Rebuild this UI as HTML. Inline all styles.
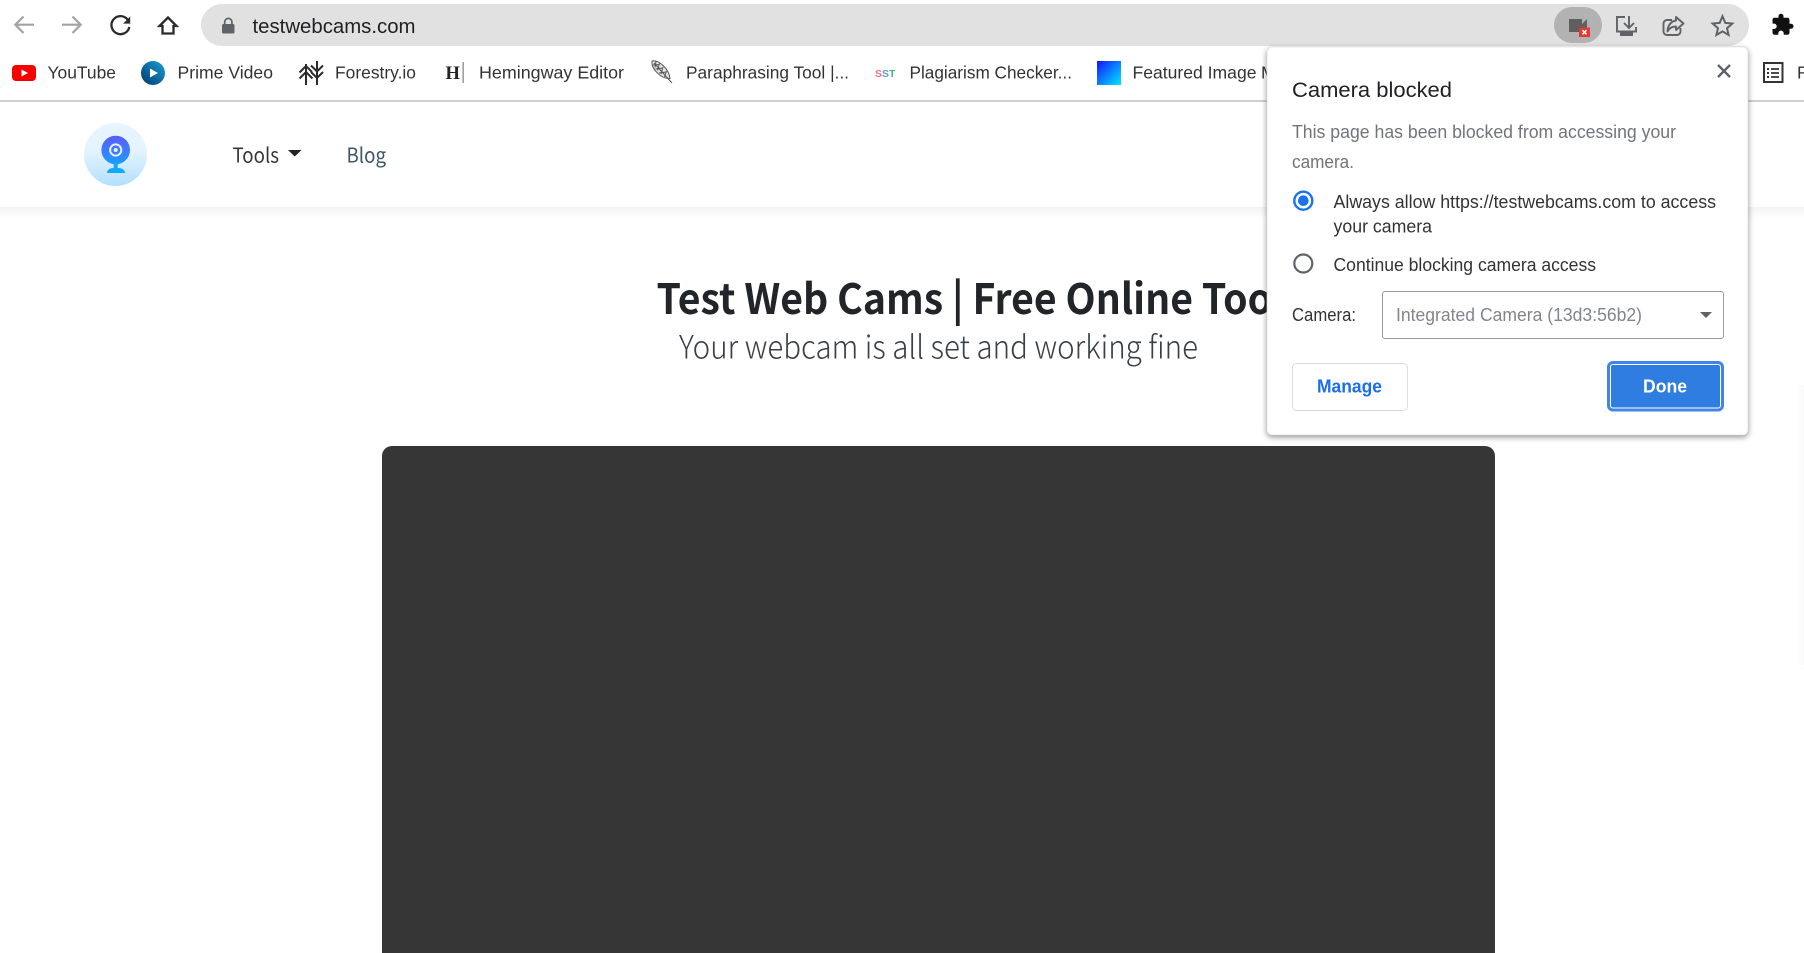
<!DOCTYPE html>
<html lang="en"><head><meta charset="utf-8"><title>Test Web Cams</title>
<style>
html,body{margin:0;padding:0;background:#fff;width:1804px;height:953px;overflow:hidden}
svg{display:block}
text{white-space:pre}
.b{font:17.6px "Liberation Sans",sans-serif;fill:#333}
.p{font:18px "Liberation Sans",sans-serif;fill:#333}
.s{font-family:"Noto Sans CJK JP","Liberation Sans",sans-serif}
</style></head><body>
<svg width="1804" height="953" viewBox="0 0 1804 953" xmlns="http://www.w3.org/2000/svg">
<defs>
<linearGradient id="lg" x1="0" y1="0" x2="0" y2="1"><stop offset="0" stop-color="#e8f5ff"/><stop offset=".45" stop-color="#e4f3ff"/><stop offset="1" stop-color="#b3dfff"/></linearGradient>
<linearGradient id="cg" x1="0" y1="0" x2="0" y2="1"><stop offset="0" stop-color="#5a5cff"/><stop offset="1" stop-color="#1e9cff"/></linearGradient>
<linearGradient id="pg" x1="0" y1="1" x2="1" y2="0"><stop offset="0" stop-color="#00386b"/><stop offset="1" stop-color="#1ba1d8"/></linearGradient>
<linearGradient id="fg" x1="0" y1="0" x2="1" y2="1"><stop offset="0" stop-color="#1414ff"/><stop offset="1" stop-color="#00eaff"/></linearGradient>
<linearGradient id="sh" x1="0" y1="0" x2="0" y2="1"><stop offset="0" stop-color="#f3f3f3"/><stop offset="1" stop-color="#fff"/></linearGradient>
<linearGradient id="rs" x1="0" y1="0" x2="1" y2="0"><stop offset="0" stop-color="#fff"/><stop offset="1" stop-color="#fafafa"/></linearGradient>
</defs>

<!-- toolbar -->
<g fill="none" stroke="#a3a3a3" stroke-width="2.2">
<path d="M34 24.7H16M23.5 16.5L15.3 24.7L23.5 33"/>
<path d="M62 24.7H80M72.5 16.5L80.7 24.7L72.5 33"/>
</g>
<g fill="none" stroke="#2a2a2a" stroke-width="2.3">
<path d="M127.5 19.5A9 9 0 1 0 129.3 27"/>
<path d="M130.2 16.5V23.6H123.1Z" fill="#2a2a2a" stroke="none"/>
<path d="M168 17.5L159.5 26H162.5V33.5H173.5V26H176.5Z" stroke-linejoin="miter"/>
</g>
<rect x="201" y="4" width="1548" height="42" rx="21" fill="#e1e1e1"/>
<rect x="222" y="24" width="12.5" height="9.5" rx="1.5" fill="#5f6368"/>
<path d="M224.7 24.5V22a3.6 3.6 0 0 1 7.2 0V24.5" fill="none" stroke="#5f6368" stroke-width="1.7"/>
<text x="252.5" y="33" textLength="163" lengthAdjust="spacingAndGlyphs" style="font:20.4px 'Liberation Sans',sans-serif;fill:#202124">testwebcams.com</text>

<!-- blocked camera chip -->
<rect x="1554" y="7" width="48" height="36" rx="18" fill="#b2b2b2"/>
<rect x="1569" y="19" width="13" height="13" fill="#5f5f5f"/>
<path d="M1582 24L1587 19V30H1582Z" fill="#5f5f5f"/>
<rect x="1579" y="27.5" width="11" height="9.5" fill="#e53935"/>
<path d="M1582.5 30.2L1586.5 34.3M1586.5 30.2L1582.5 34.3" stroke="#fff" stroke-width="1.5"/>

<!-- install, share, star -->
<g fill="none" stroke="#5f6368" stroke-width="1.9">
<path d="M1625 17H1617V31.500H1636V27"/>
<path d="M1629 16V28M1624 23L1629 28L1634 23"/>
<path d="M1672 20H1667a3.5 3.5 0 0 0-3.5 3.5V31.5a3.5 3.5 0 0 0 3.5 3.5H1677a3.5 3.5 0 0 0 3.5-3.5V28"/>
<path d="M1676 17L1683.5 23.5L1676 30V26.5C1671.5 26.5 1669 28.5 1667.5 31.5C1667.5 26 1671 21 1676 20.5Z" stroke-linejoin="round"/>
<path d="M1722.5 16.200L1725.3 22.900L1732.3 23.500L1727 28.200L1728.6 35L1722.5 31.400L1716.4 35L1718 28.200L1712.7 23.500L1719.7 22.900Z" stroke-width="2"/>
</g>
<rect x="1620" y="32.500" width="13" height="3.500" fill="#5f6368"/>
<path transform="translate(1770.5 12.8)" fill="#111" d="M20.5 11H19V7c0-1.1-.9-2-2-2h-4V3.5C13 2.12 11.88 1 10.5 1S8 2.12 8 3.5V5H4c-1.1 0-1.99.9-1.99 2v3.8H3.5c1.49 0 2.7 1.21 2.7 2.7s-1.21 2.7-2.7 2.7H2V20c0 1.1.9 2 2 2h3.8v-1.5c0-1.49 1.21-2.7 2.7-2.7 1.49 0 2.7 1.21 2.7 2.7V22H17c1.1 0 2-.9 2-2v-4h1.5c1.38 0 2.5-1.12 2.5-2.5S21.88 11 20.5 11z"/>

<!-- bookmarks -->
<rect x="12" y="65" width="24" height="16" rx="4" fill="#f70000"/>
<path d="M21.5 69.5L28 73L21.5 76.5Z" fill="#fff"/>
<text class="b" x="47.500" y="78.5" textLength="68.500" lengthAdjust="spacingAndGlyphs">YouTube</text>
<circle cx="153" cy="73" r="12" fill="url(#pg)"/>
<path d="M150 68.5L158 73L150 77.5Z" fill="#fff"/>
<text class="b" x="177.500" y="78.5" textLength="95.500" lengthAdjust="spacingAndGlyphs">Prime Video</text>
<g fill="none" stroke="#2b2b2b" stroke-width="2">
<path d="M306 85V64M317 85V61"/>
<path d="M299.5 72.5L306 66L312 72M299.5 78.5L306 72L312.5 78.5"/>
<path d="M311 65.5L317 71.5L323 65.5M311 72L317 78L323 72"/>
</g>
<text class="b" x="335" y="78.5" textLength="81" lengthAdjust="spacingAndGlyphs">Forestry.io</text>
<text x="445.5" y="79" style="font:bold 18.5px 'Liberation Serif',serif;fill:#222">H</text>
<rect x="462.5" y="62" width="1.3" height="21" fill="#8a8a8a"/>
<text class="b" x="479" y="78.5" textLength="145" lengthAdjust="spacingAndGlyphs">Hemingway Editor</text>
<g fill="none" stroke="#555" stroke-width="1">
<path d="M652 61C659 59.500 669 69 670 78.500C662 79 651 70 652 61Z" fill="#e4e4e4"/>
<path d="M654 63L672 83M656 61.500L655 67.500M659.500 63.500L657.500 70.500M663 67L661 74M666.500 71L664.500 77M653 65L659 64.500M655.500 69L662 68M659 73L666 72" stroke-width="1"/>
</g>
<text class="b" x="686" y="78.5" textLength="163" lengthAdjust="spacingAndGlyphs">Paraphrasing Tool |...</text>
<text x="875" y="77" style="font:bold 10.5px 'Liberation Sans',sans-serif"><tspan fill="#f0757a">S</tspan><tspan fill="#5b9bd5">S</tspan><tspan fill="#4daf7c">T</tspan></text>
<text class="b" x="909.500" y="78.5" textLength="162.500" lengthAdjust="spacingAndGlyphs">Plagiarism Checker...</text>
<rect x="1097" y="61" width="24" height="24" fill="url(#fg)"/>
<text class="b" x="1132.500" y="78.5" textLength="124" lengthAdjust="spacingAndGlyphs">Featured Image</text>
<text class="b" x="1261" y="78.5">M</text>
<rect x="1764" y="63" width="18.5" height="19" fill="none" stroke="#333" stroke-width="2"/>
<path d="M1767 68h2v2h-2zM1767 72h2v2h-2zM1767 76h2v2h-2z" fill="#333"/>
<path d="M1771 69h8M1771 73h8M1771 77h8" stroke="#333" stroke-width="1.8"/>
<text class="b" x="1797" y="78.5">R</text>
<rect x="0" y="100" width="1804" height="2" fill="#cfcfcf"/>

<!-- site nav -->
<rect x="0" y="207" width="1804" height="12" fill="url(#sh)"/>
<rect x="1795" y="385" width="9" height="280" fill="url(#rs)"/>
<circle cx="115.5" cy="154.5" r="31.5" fill="url(#lg)"/>
<circle cx="115.7" cy="150" r="14.3" fill="url(#cg)"/>
<circle cx="115.7" cy="150" r="5.6" fill="none" stroke="#e9efff" stroke-width="2"/>
<circle cx="115.7" cy="150" r="2" fill="#e9efff"/>
<rect x="113.700" y="163.500" width="4" height="5" fill="#12a8ff"/>
<path d="M107 173C107 170 110 168 113 168H118.500C122 168 125 170 125 173Z" fill="#12a8ff"/>
<text class="s" x="232.500" y="162.500" textLength="46.500" lengthAdjust="spacingAndGlyphs" style="font-size:20.5px;fill:#33383d">Tools</text>
<path d="M288 150H301.500L294.700 156.500Z" fill="#222"/>
<text class="s" x="346.500" y="162.500" textLength="39.500" lengthAdjust="spacingAndGlyphs" style="font-size:20.5px;fill:#3e5468">Blog</text>

<!-- hero -->
<text class="s" transform="translate(656.500 314) scale(.933 1)" x="0" y="0" style="font-size:42px;font-weight:700;fill:#212529">Test Web Cams | Free Online Tools</text>
<text class="s" x="679" y="358.500" textLength="519" lengthAdjust="spacingAndGlyphs" style="font-size:32px;font-weight:300;fill:#3a3f45">Your webcam is all set and working fine</text>
<rect x="382" y="446" width="1113" height="520" rx="10" fill="#363636"/>

<!-- permission bubble -->
<rect x="1267" y="47" width="481" height="388" rx="5" fill="#fff" stroke="#d8d8d8" stroke-width=".6" style="filter:drop-shadow(0 2px 3px rgba(0,0,0,.42))"/>
<path d="M1718 65L1730 77M1730 65L1718 77" stroke="#5f6368" stroke-width="2.4"/>
<text class="p" x="1292" y="97" textLength="160" lengthAdjust="spacingAndGlyphs" style="font-size:21px;fill:#202124">Camera blocked</text>
<text class="p" x="1292" y="138" textLength="384" lengthAdjust="spacingAndGlyphs" style="fill:#70757a">This page has been blocked from accessing your</text>
<text class="p" x="1292" y="168" textLength="62" lengthAdjust="spacingAndGlyphs" style="fill:#70757a">camera.</text>
<circle cx="1303.300" cy="200.700" r="9" fill="none" stroke="#1a73e8" stroke-width="2.400"/>
<circle cx="1303.300" cy="200.700" r="5.300" fill="#1a73e8"/>
<text class="p" x="1333.500" y="208" textLength="382.500" lengthAdjust="spacingAndGlyphs">Always allow https://testwebcams.com to access</text>
<text class="p" x="1333.500" y="232.500" textLength="98.500" lengthAdjust="spacingAndGlyphs">your camera</text>
<circle cx="1303.300" cy="263.500" r="9" fill="none" stroke="#5f6368" stroke-width="2.200"/>
<text class="p" x="1333.500" y="271" textLength="262.500" lengthAdjust="spacingAndGlyphs">Continue blocking camera access</text>
<text class="p" x="1292" y="321" textLength="64" lengthAdjust="spacingAndGlyphs">Camera:</text>
<rect x="1382.500" y="291.500" width="341" height="47" rx="2.500" fill="#fff" stroke="#9a9a9a"/>
<text class="p" x="1396" y="321" textLength="246" lengthAdjust="spacingAndGlyphs" style="fill:#80868b">Integrated Camera (13d3:56b2)</text>
<path d="M1700 312H1712L1706 318Z" fill="#5f6368"/>
<rect x="1292.500" y="363.500" width="115" height="47" rx="4" fill="#fff" stroke="#dadce0"/>
<text x="1317" y="392.500" textLength="65" lengthAdjust="spacingAndGlyphs" style="font:bold 18px 'Liberation Sans',sans-serif;fill:#1a6fe8">Manage</text>
<rect x="1607" y="361" width="117" height="50.500" rx="6" fill="#3f85ea"/>
<rect x="1610" y="364" width="111" height="44.500" rx="3" fill="#fff"/>
<rect x="1611" y="365" width="109" height="42.500" rx="2" fill="#2f7de1"/>
<text x="1643" y="392.500" textLength="44" lengthAdjust="spacingAndGlyphs" style="font:bold 18px 'Liberation Sans',sans-serif;fill:#fff">Done</text>
</svg>
</body></html>
